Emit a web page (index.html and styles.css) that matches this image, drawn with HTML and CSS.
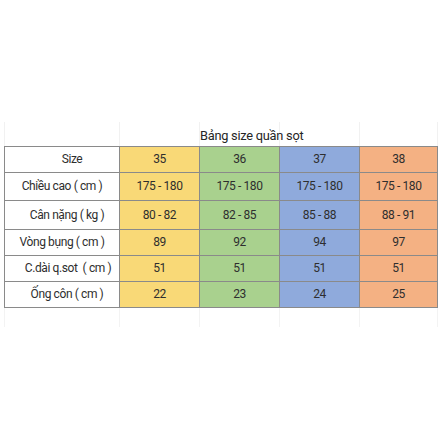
FILE: index.html
```html
<!DOCTYPE html>
<html lang="vi">
<head>
<meta charset="utf-8">
<title>Bảng size quần sọt</title>
<link rel="stylesheet" href="styles.css">
</head>
<body>
<div class="sheet">
  <table class="size-table">
    <colgroup>
      <col class="c-label">
      <col class="c-35">
      <col class="c-36">
      <col class="c-37">
      <col class="c-38">
    </colgroup>
    <tr class="title-row">
      <td class="faint"></td>
      <td class="faint"></td>
      <td class="faint title-cell"><span class="title">Bảng size quần sọt</span></td>
      <td class="faint"></td>
      <td class="faint"></td>
    </tr>
    <tr class="r1">
      <td class="label shift-size">Size</td>
      <td class="y">35</td>
      <td class="g">36</td>
      <td class="b">37</td>
      <td class="o">38</td>
    </tr>
    <tr class="r2">
      <td class="label">Chiều cao ( cm )</td>
      <td class="y">175 - 180</td>
      <td class="g">175 - 180</td>
      <td class="b">175 - 180</td>
      <td class="o">175 - 180</td>
    </tr>
    <tr class="r3">
      <td class="label shift-a">Cân nặng ( kg )</td>
      <td class="y">80 - 82</td>
      <td class="g">82 - 85</td>
      <td class="b">85 - 88</td>
      <td class="o">88 - 91</td>
    </tr>
    <tr class="r4">
      <td class="label">Vòng bụng ( cm )</td>
      <td class="y">89</td>
      <td class="g">92</td>
      <td class="b">94</td>
      <td class="o">97</td>
    </tr>
    <tr class="r5">
      <td class="label shift-b">C.dài q.sot &nbsp;( cm )</td>
      <td class="y">51</td>
      <td class="g">51</td>
      <td class="b">51</td>
      <td class="o">51</td>
    </tr>
    <tr class="r6">
      <td class="label shift-a">Ống côn ( cm )</td>
      <td class="y">22</td>
      <td class="g">23</td>
      <td class="b">24</td>
      <td class="o">25</td>
    </tr>
    <tr class="tail-row">
      <td class="faint-bottom"></td>
      <td class="faint-bottom"></td>
      <td class="faint-bottom"></td>
      <td class="faint-bottom"></td>
      <td class="faint-bottom"></td>
    </tr>
  </table>
</div>
</body>
</html>
```
FILE: styles.css
```css
html, body {
  margin: 0;
  padding: 0;
  background: #ffffff;
}

.sheet {
  padding: 122px 4px 0 4px;
}

.size-table {
  border-collapse: collapse;
  table-layout: fixed;
  width: 433px;
  font-family: Roboto, "Noto Sans", sans-serif;
  font-size: 12px;
  letter-spacing: -0.4px;
  color: #2e2e2e;
}

.c-label { width: 115px; }
.c-35 { width: 80px; }
.c-36 { width: 80px; }
.c-37 { width: 80px; }
.c-38 { width: 78px; }

.size-table td {
  border: 1px solid #8a8a8a;
  text-align: center;
  vertical-align: middle;
  padding: 0;
  white-space: nowrap;
}

.size-table td.faint {
  border: none;
  border-left: 1px solid #f1f1f1;
  border-right: 1px solid #f1f1f1;
  border-bottom: 1px solid #8a8a8a;
}

.size-table td.faint-bottom {
  border: none;
  border-left: 1px solid #f3f3f3;
  border-right: 1px solid #f3f3f3;
  border-top: 1px solid #8a8a8a;
}

.title-row { height: 24px; }
.title-cell {
  text-align: left;
  overflow: visible;
  position: relative;
}
.title {
  position: absolute;
  left: 0;
  bottom: 3px;
  font-size: 12.8px;
  letter-spacing: -0.25px;
  color: #262626;
}

.r1 { height: 26px; }
.r2 { height: 28px; }
.r3 { height: 29px; }
.r4 { height: 26px; }
.r5 { height: 26px; }
.r6 { height: 26px; }
.tail-row { height: 20px; }

.label { background: #ffffff; }
.shift-size { padding-left: 20px !important; }
.shift-a { padding-left: 10px !important; }
.shift-b { padding-left: 12px !important; }

.y { background: #f9d977; }
.g { background: #a9d18e; }
.b { background: #8faadc; }
.o { background: #f4b183; }

.size-table td.g,
.size-table td.b,
.size-table td.o {
  border-left-color: #5e5e5e;
}
```
